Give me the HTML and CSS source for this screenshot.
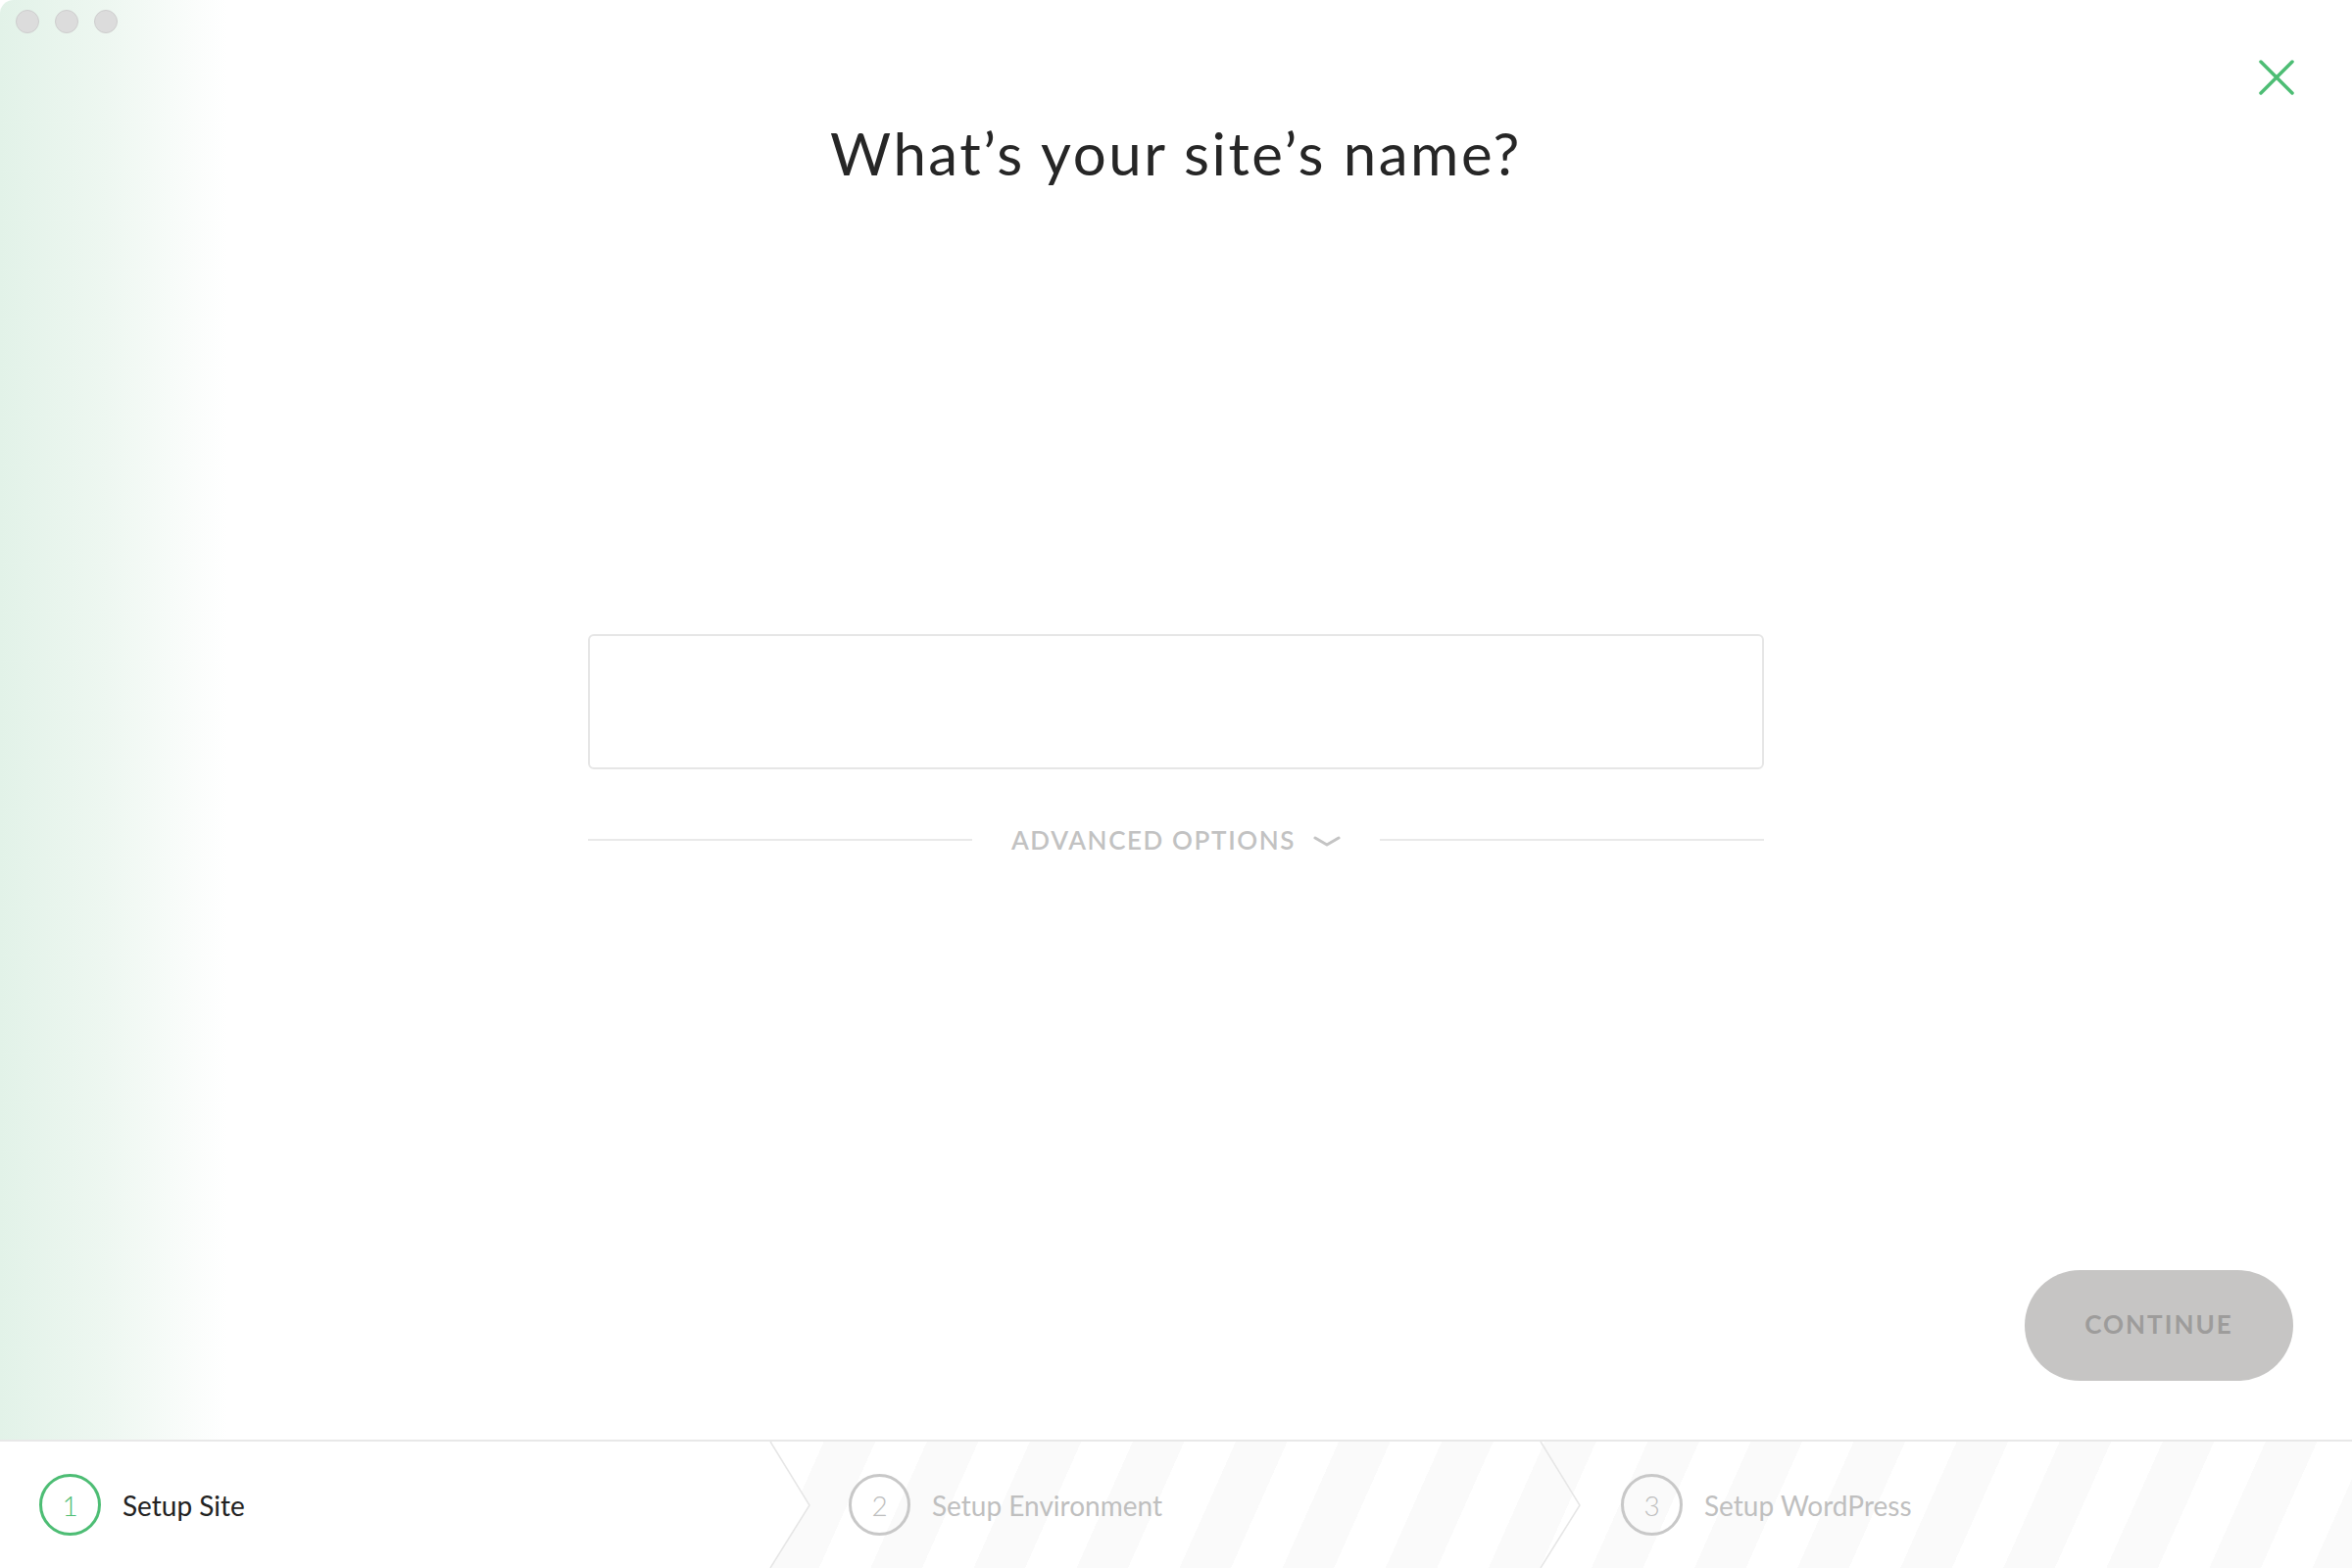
FILE: index.html
```html
<!DOCTYPE html>
<html lang="en">
<head>
<meta charset="utf-8">
<title>New Site</title>
<link rel="stylesheet" href="styles.css">
</head>
<body>
<div class="window">
  <main class="content">
    <div class="titlebar">
      <span class="light"></span>
      <span class="light"></span>
      <span class="light"></span>
    </div>
    <header class="header">
      <div class="spacer"></div>
      <h1 class="title">What’s your site’s name?</h1>
      <button class="close" aria-label="Close">
        <svg width="36" height="36" viewBox="0 0 36 36"><path d="M2 2 L34 34 M34 2 L2 34" stroke="#4dbd74" stroke-width="3.5" stroke-linecap="round" fill="none"/></svg>
      </button>
    </header>
    <section class="form">
      <input class="name-input" type="text" aria-label="Site name">
      <div class="advanced">
        <span class="rule"></span>
        <button class="adv-toggle">ADVANCED OPTIONS
          <svg class="chev" width="28" height="14" viewBox="0 0 28 14"><path d="M2 3 L14 10 L26 3" stroke="#c4c4c4" stroke-width="3" stroke-linecap="round" stroke-linejoin="round" fill="none"/></svg>
        </button>
        <span class="rule"></span>
      </div>
    </section>
    <footer class="actions">
      <button class="continue">CONTINUE</button>
    </footer>
  </main>
  <nav class="steps">
    <div class="step step-active">
      <span class="num">1</span>
      <span class="label">Setup Site</span>
      <svg class="sep" viewBox="0 0 40 129" preserveAspectRatio="none"><polygon points="0,0 40,65 0,129" fill="#ffffff"/><polyline points="0,0 40,65 0,129" fill="none" stroke="#e6e6e6" stroke-width="1.5"/></svg>
    </div>
    <div class="step">
      <span class="num">2</span>
      <span class="label">Setup Environment</span>
      <svg class="sep" viewBox="0 0 40 129" preserveAspectRatio="none"><polyline points="0,0 40,65 0,129" fill="none" stroke="#e6e6e6" stroke-width="1.5"/></svg>
    </div>
    <div class="step">
      <span class="num">3</span>
      <span class="label">Setup WordPress</span>
    </div>
  </nav>
</div>
</body>
</html>
```
FILE: styles.css
```css
* { box-sizing: border-box; }
html, body { margin: 0; padding: 0; background: #fff; }
body { font-family: Lato, "Open Sans", "Liberation Sans", sans-serif; color: #222; }

.window {
  width: 2400px;
  height: 1600px;
  display: flex;
  flex-direction: column;
  border-top-left-radius: 14px;
  overflow: hidden;
}

.content {
  flex: 1;
  display: flex;
  flex-direction: column;
  background: linear-gradient(90deg, #e2f2e8 0px, #eef7f1 110px, #ffffff 232px);
}

.titlebar {
  height: 44px;
  display: flex;
  gap: 16px;
  padding: 10px 0 0 16px;
}
.light {
  width: 24px;
  height: 24px;
  border-radius: 50%;
  background: #dcdcdc;
  border: 1px solid #cdcdcd;
}

.header {
  display: grid;
  grid-template-columns: 1fr auto 1fr;
  padding: 0 60px;
}
.title {
  margin: 76px 0 0;
  font-size: 60px;
  line-height: 72px;
  font-weight: 400;
  letter-spacing: 2.5px;
  color: #262626;
}
.close {
  justify-self: end;
  align-self: start;
  margin-top: 17px;
  margin-right: -1px;
  width: 36px;
  height: 36px;
  padding: 0;
  border: 0;
  background: none;
  display: flex;
}

.form {
  width: 1200px;
  margin: 455px auto 0;
  display: flex;
  flex-direction: column;
}
.name-input {
  width: 1200px;
  height: 138px;
  border: 2px solid #e6e6e6;
  border-radius: 6px;
  background: #fff;
  outline: none;
  padding: 0 30px;
  font: inherit;
  font-size: 40px;
}
.advanced {
  margin-top: 56px;
  height: 32px;
  display: flex;
  align-items: center;
  gap: 40px;
}
.rule {
  flex: 1;
  height: 2px;
  background: #e9e9e9;
}
.adv-toggle {
  display: flex;
  align-items: center;
  gap: 18px;
  padding: 0;
  border: 0;
  background: none;
  font-family: Lato, "Open Sans", "Liberation Sans", sans-serif;
  font-size: 26px;
  font-weight: 600;
  letter-spacing: 1.6px;
  color: #c2c2c2;
  line-height: 32px;
}
.chev { margin-top: 4px; }

.actions {
  margin-top: auto;
  display: flex;
  justify-content: flex-end;
  padding: 0 60px 60px;
}
.continue {
  width: 274px;
  height: 113px;
  border: 0;
  border-radius: 57px;
  background: #c6c5c4;
  color: #9d9c9b;
  font-family: Lato, "Open Sans", "Liberation Sans", sans-serif;
  font-size: 26px;
  font-weight: 700;
  letter-spacing: 2px;
  padding: 0 0 3px;
}

.steps {
  height: 131px;
  border-top: 2px solid #e8e8e8;
  display: flex;
  background: repeating-linear-gradient(114deg, #fafafa 0px, #fafafa 48px, #ffffff 48px, #ffffff 96px);
}
.step {
  position: relative;
  width: 786px;
  display: flex;
  align-items: center;
  gap: 22px;
  padding-left: 80px;
  color: #bfbfbf;
}
.step:last-child { flex: 1; padding-left: 82px; }
.step-active {
  background: #fff;
  padding-left: 40px;
  color: #222;
}
.num {
  width: 63px;
  height: 63px;
  border-radius: 50%;
  border: 3px solid #c8c8c8;
  display: flex;
  align-items: center;
  justify-content: center;
  font-size: 28px;
  font-weight: 300;
  color: #bdbdbd;
}
.step-active .num {
  border-color: #4dbd74;
  color: #4dbd74;
}
.label {
  font-size: 28px;
  font-weight: 400;
  line-height: 34px;
}
.sep {
  position: absolute;
  left: 100%;
  top: 0;
  width: 40px;
  height: 100%;
  overflow: visible;
  z-index: 1;
}
```
